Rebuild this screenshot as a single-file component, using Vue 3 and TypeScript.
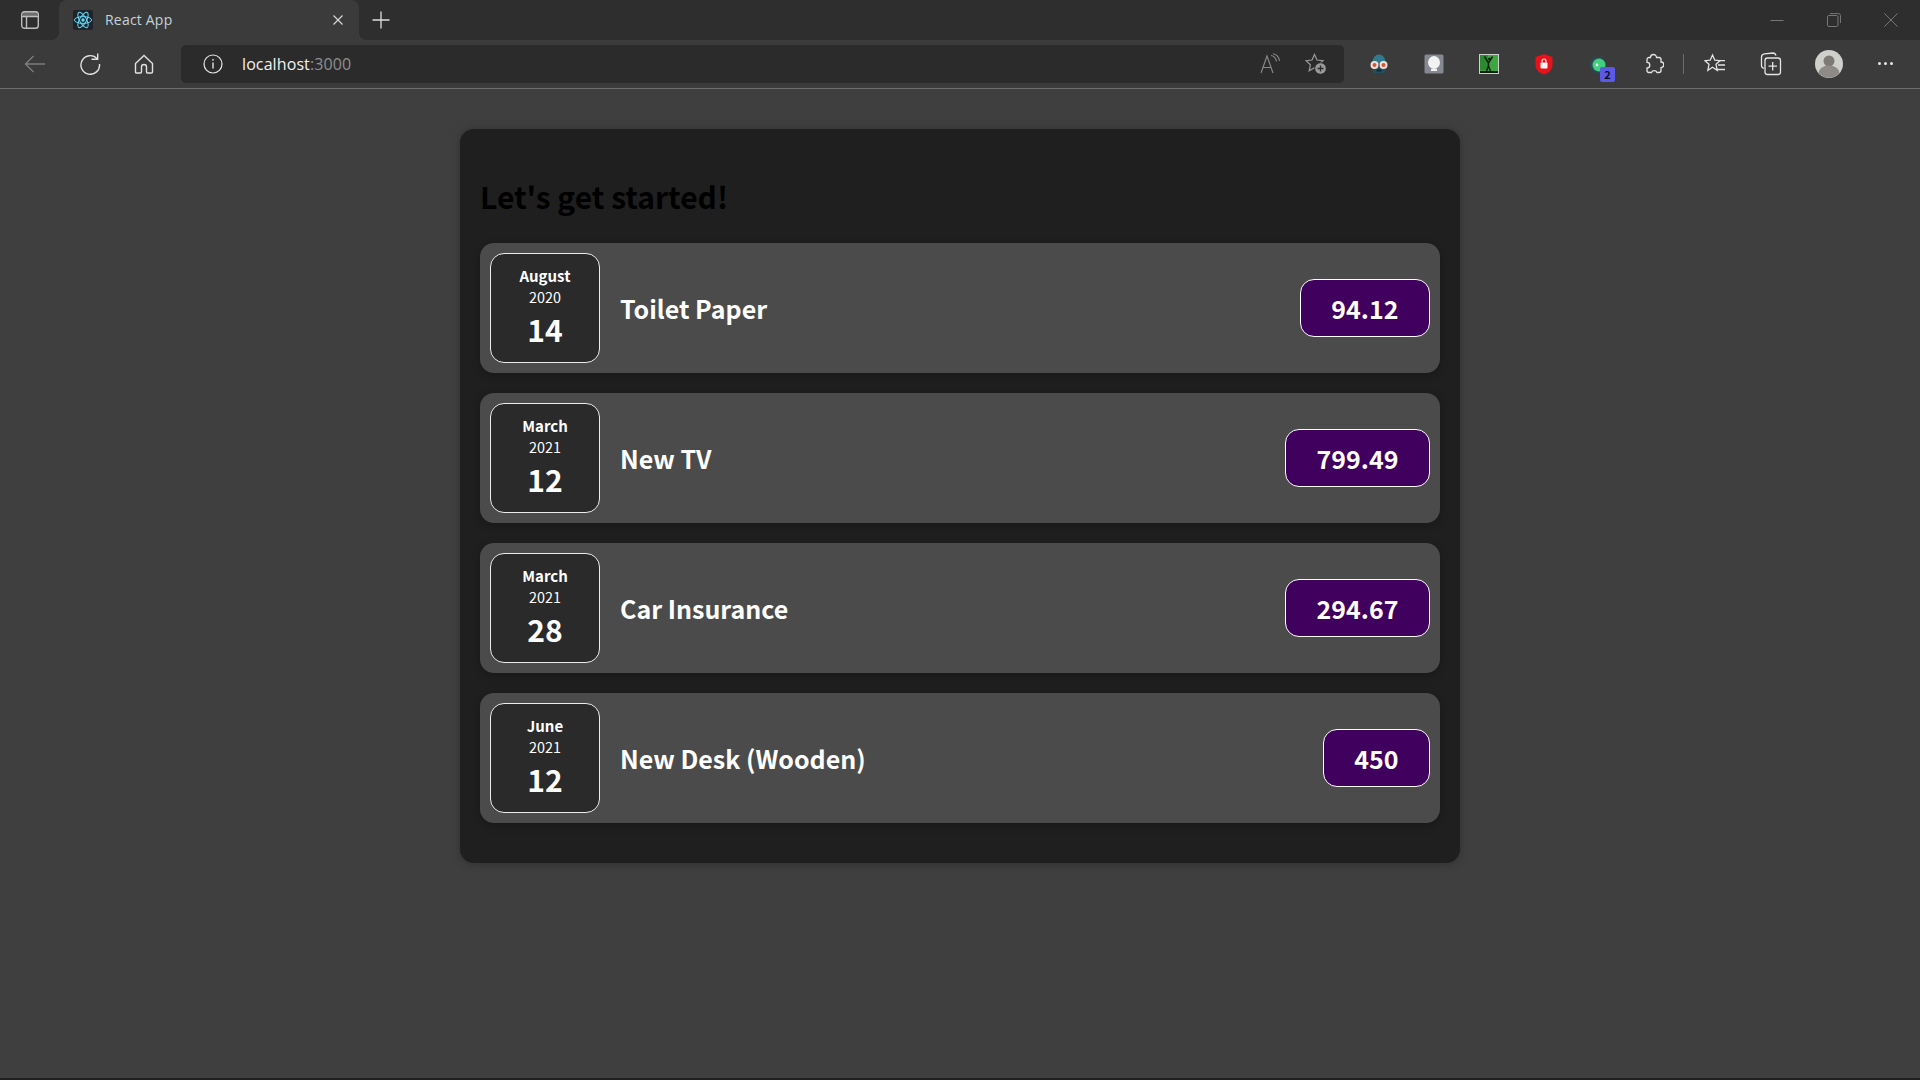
<template>
  <div class="window">
    <div class="tabstrip">
      <div class="tab-toggle">
        <svg width="20" height="20" viewBox="0 0 20 20" fill="none" stroke="#bdbdbd" stroke-width="1.4">
          <path d="M3 2h14v4.500H3z" fill="#bdbdbd" stroke="none" opacity=".45" />
          <rect x="1.700" y="1.700" width="16.600" height="16.600" rx="2.800" />
          <path d="M2 6.500h16M6.500 7v11" />
        </svg>
      </div>
      <div class="tab">
        <span class="favicon">
          <svg width="20" height="20" viewBox="0 0 20 20" fill="none" stroke="#61dafb" stroke-width="1">
            <circle cx="10" cy="10" r="1.700" fill="#61dafb" stroke="none" />
            <ellipse cx="10" cy="10" rx="8.600" ry="3.400" />
            <ellipse cx="10" cy="10" rx="8.600" ry="3.400" transform="rotate(60 10 10)" />
            <ellipse cx="10" cy="10" rx="8.600" ry="3.400" transform="rotate(120 10 10)" />
          </svg>
        </span>
        <span class="tab-title">React App</span>
        <svg class="tab-close" width="12" height="12" viewBox="0 0 12 12" stroke="#d6d6d6" stroke-width="1.200">
          <path d="M1.500 1.500l9 9M10.500 1.500l-9 9" />
        </svg>
      </div>
      <svg class="new-tab" width="18" height="18" viewBox="0 0 18 18" stroke="#dedede" stroke-width="1.300">
        <path d="M9 0.500v17M0.500 9h17" />
      </svg>
      <div class="window-controls">
        <svg width="14" height="14" viewBox="0 0 14 14" stroke="#767676" stroke-width="1"><path d="M0.500 7.500h13" /></svg>
        <svg width="14" height="14" viewBox="0 0 14 14" fill="none" stroke="#767676" stroke-width="1">
          <rect x="0.500" y="2.500" width="10.500" height="11" rx="1.500" />
          <path d="M3 .6h8.500a2 2 0 0 1 2 2V10" />
        </svg>
        <svg width="14" height="14" viewBox="0 0 14 14" stroke="#767676" stroke-width="1"><path d="M.5.5l13 13M13.500.5l-13 13" /></svg>
      </div>
    </div>

    <div class="toolbar">
      <div class="nav-buttons">
        <svg width="22" height="22" viewBox="0 0 22 22" fill="none" stroke="#7c7c7c" stroke-width="1.400">
          <path d="M21 11H1.500M9.500 3L1.500 11l8 8" />
        </svg>
        <svg width="22" height="22" viewBox="0 0 22 22" fill="none" stroke="#e2e2e2" stroke-width="1.400">
          <path d="M18.200 5.800A9.300 9.300 0 1 0 20.500 11" />
          <path d="M12.500 6.300h6.200V.6" />
        </svg>
        <svg width="20" height="20" viewBox="0 0 20 20" fill="none" stroke="#e2e2e2" stroke-width="1.400">
          <path d="M1.500 9.500L10 1.500l8.500 8V18a1 1 0 0 1-1 1h-4a1 1 0 0 1-1-1v-5a2.500 2.500 0 0 0-5 0v5a1 1 0 0 1-1 1h-4a1 1 0 0 1-1-1z" />
        </svg>
      </div>
      <div class="address-bar">
        <svg class="info-icon" width="20" height="20" viewBox="0 0 20 20" fill="none" stroke="#e6e6e6" stroke-width="1.200">
          <circle cx="10" cy="10" r="9" />
          <path d="M10 8.500v6" stroke-width="1.400" />
          <circle cx="10" cy="5.800" r=".9" fill="#e6e6e6" stroke="none" />
        </svg>
        <span class="url"><span class="url-host">localhost</span><span class="url-port">:3000</span></span>
        <div class="address-actions">
          <svg width="22" height="22" viewBox="0 0 22 22" fill="none" stroke="#8a8a8a" stroke-width="1.100">
            <path d="M2 20L8 3l6 17M4 14.500h8" />
            <path d="M12 2.500c3 .5 5 3 5.500 6M14 .8c3.500 .8 6 3.500 6.500 7" />
          </svg>
          <svg width="22" height="22" viewBox="0 0 22 22" fill="none" stroke="#9a9a9a" stroke-width="1.200">
            <path d="M9.500 1.500l2.500 5.500 6 .7-4.500 4.100 1.200 6-5.200-3-5.300 3 1.200-6L1 7.700l6-.7z" />
            <circle cx="15.500" cy="15.500" r="5.800" fill="#9a9a9a" stroke="#2b2b2b" stroke-width="1" />
            <path d="M15.500 12.500v6M12.500 15.500h6" stroke="#2b2b2b" stroke-width="1.300" />
          </svg>
        </div>
      </div>
      <div class="extensions">
        <svg width="20" height="22" viewBox="0 0 20 22">
          <path d="M3.500 9a6.500 7.500 0 0 1 13 0v2h-13z" fill="#2f7a8c" />
          <rect x="4" y="14" width="12" height="6" rx="1.500" fill="#22505e" />
          <circle cx="5.500" cy="12" r="4" fill="#f0e2d8" />
          <circle cx="14.500" cy="12" r="4" fill="#f0e2d8" />
          <circle cx="5.500" cy="12" r="2" fill="#d2543c" />
          <circle cx="14.500" cy="12" r="2" fill="#d2543c" />
          <path d="M7.500 17.500h5" stroke="#0f2a33" stroke-width="2" />
        </svg>
        <svg width="20" height="20" viewBox="0 0 20 20">
          <rect x="0.500" y="0.500" width="19" height="19" rx="1.500" fill="#858890" />
          <ellipse cx="10" cy="8.500" rx="6" ry="6.500" fill="#f2f2f2" />
          <rect x="7" y="15" width="6" height="2" fill="#f2f2f2" />
        </svg>
        <svg width="20" height="20" viewBox="0 0 20 20">
          <rect x="0.500" y="0.500" width="19" height="19" fill="#3fa73f" stroke="#cfcfcf" />
          <rect x="1" y="1" width="8" height="15" fill="#2d8a33" />
          <path d="M1 17h18v2H1z" fill="#0d1f0d" />
          <g fill="none" stroke="#0d1f0d" stroke-width="1.500">
            <path d="M5.500 2.500l4 6.500 4-6.500M9.500 9v3l-2 5M9.500 12l2 5" />
          </g>
          <circle cx="10.500" cy="5" r="1.500" fill="#0d1f0d" />
        </svg>
        <svg width="20" height="22" viewBox="0 0 20 22">
          <path d="M10 1l8.500 3v8c0 5-4 8-8.500 9.500C5.500 20 1.500 17 1.500 12V4z" fill="#e8121b" />
          <rect x="6.500" y="9.500" width="7" height="6" rx=".8" fill="#f4f4f4" />
          <path d="M8 9.500V8a2 2 0 0 1 4 0v1.500" fill="none" stroke="#f4f4f4" stroke-width="1.200" />
        </svg>
        <span class="bug-ext">
          <svg width="20" height="22" viewBox="0 0 20 22">
            <path d="M4 2l3 3M14 2l-3 3" stroke="#2a4a55" stroke-width="1.200" />
            <circle cx="9" cy="12" r="8" fill="#2a4a55" />
            <circle cx="10" cy="12" r="6.500" fill="#3fd17e" />
            <circle cx="8" cy="12" r="1.400" fill="#f0f0f0" />
          </svg>
          <span class="bug-badge">2</span>
        </span>
        <svg width="20" height="22" viewBox="0 0 20 22" fill="none" stroke="#e4e4e4" stroke-width="1.300">
          <path d="M6.500 4.500a3 3 0 0 1 6 0h2.500a2 2 0 0 1 2 2V9a2.800 2.800 0 0 1 0 5.600v2.900a2 2 0 0 1-2 2h-2a3 3 0 0 0-5.500 0H5a2 2 0 0 1-2-2V15a2.800 2.800 0 0 0 0-5.600V6.500a2 2 0 0 1 2-2z" />
        </svg>
        <span class="toolbar-sep"></span>
        <svg width="22" height="22" viewBox="0 0 22 22" fill="none" stroke="#e4e4e4" stroke-width="1.300">
          <path d="M8.500 2l2.300 5.200 5.200.5-4 3.600 1.200 6-4.700-3-4.700 3 1.200-6L1 7.700l5.200-.5z" />
          <path d="M14.500 7.700H21M14 12h7M12.500 16.500H21" />
        </svg>
        <svg class="collections" width="22" height="24" viewBox="0 0 22 24" fill="none" stroke="#e4e4e4" stroke-width="1.300">
          <path d="M4 16.500c-1.500-.5-2.500-1.500-2.500-3L1.500 5c0-2 1-3 3-3.200l8.500-.8c1.500 0 2.500 .8 3 2.500" />
          <rect x="5" y="6" width="15.500" height="16.500" rx="2.500" />
          <path d="M12.700 10v8.500M8.500 14.200h8.500" />
        </svg>
        <span class="avatar">
          <svg width="28" height="28" viewBox="0 0 28 28">
            <circle cx="14" cy="14" r="14" fill="#cfcfcb" />
            <circle cx="14" cy="11" r="5.500" fill="#7d7a76" />
            <path d="M3.500 23a10.500 7.500 0 0 1 21 0a14 14 0 0 1-21 0z" fill="#8e8b87" />
          </svg>
        </span>
        <span class="more-dots"><i></i><i></i><i></i></span>
      </div>
    </div>

    <main class="page">
      <section class="expenses-card">
        <h2 class="heading">Let's get started!</h2>
        <div class="expense-list">
          <div v-for="item in expenses" :key="item.id" class="expense-item">
            <div class="expense-date">
              <div class="month">{{ item.month }}</div>
              <div class="year">{{ item.year }}</div>
              <div class="day">{{ item.day }}</div>
            </div>
            <h2 class="expense-title">{{ item.title }}</h2>
            <div class="expense-price">{{ item.amount }}</div>
          </div>
        </div>
      </section>
    </main>
  </div>
</template>

<script setup lang="ts">
interface Expense {
  id: string
  month: string
  year: string
  day: string
  title: string
  amount: string
}

const expenses: Expense[] = [
  { id: 'e1', month: 'August', year: '2020', day: '14', title: 'Toilet Paper', amount: '94.12' },
  { id: 'e2', month: 'March', year: '2021', day: '12', title: 'New TV', amount: '799.49' },
  { id: 'e3', month: 'March', year: '2021', day: '28', title: 'Car Insurance', amount: '294.67' },
  { id: 'e4', month: 'June', year: '2021', day: '12', title: 'New Desk (Wooden)', amount: '450' },
]
</script>

<style>
html,
body {
  margin: 0;
  background: #3f3f3f;
}
</style>

<style scoped>
.window {
  height: 1080px;
  display: flex;
  flex-direction: column;
  overflow: hidden;
  box-sizing: border-box;
  border-bottom: 2px solid #1f1f1f;
  font-family: "Noto Sans CJK JP", "Noto Sans", sans-serif;
}

.tabstrip {
  height: 40px;
  flex: none;
  display: flex;
  align-items: center;
  background: #2e2e2e;
  box-sizing: border-box;
}

.tab-toggle {
  width: 59px;
  height: 40px;
  display: flex;
  align-items: center;
  justify-content: center;
  padding-left: 1px;
  box-sizing: border-box;
}

.tab {
  position: relative;
  width: 300px;
  height: 40px;
  display: flex;
  align-items: center;
  background: #3b3b3b;
  border-radius: 8px 8px 0 0;
  box-sizing: border-box;
  padding-left: 14px;
  font-family: "Open Sans", sans-serif;
}

.tab::before,
.tab::after {
  content: "";
  position: absolute;
  bottom: 0;
  width: 8px;
  height: 8px;
}

.tab::before {
  left: -8px;
  background: radial-gradient(circle at 0 0, transparent 8px, #3b3b3b 8px);
}

.tab::after {
  right: -8px;
  background: radial-gradient(circle at 100% 0, transparent 8px, #3b3b3b 8px);
}

.favicon {
  width: 20px;
  height: 20px;
  background: #20232a;
  border-radius: 2px;
  display: block;
}

.favicon svg {
  display: block;
}

.tab-title {
  margin-left: 12px;
  margin-top: -2px;
  font-size: 14px;
  letter-spacing: 0.2px;
  color: #c4d2dc;
  flex: 1;
}

.tab-close {
  margin-right: 15px;
}

.new-tab {
  margin-left: 13px;
}

.window-controls {
  margin-left: auto;
  display: flex;
  gap: 43px;
  margin-right: 22px;
}

.toolbar {
  height: 49px;
  flex: none;
  display: flex;
  align-items: center;
  background: #3b3b3b;
  border-bottom: 1px solid #6d6d6d;
  box-sizing: border-box;
  padding-bottom: 1px;
}

.nav-buttons {
  width: 181px;
  display: flex;
  align-items: center;
  gap: 33px;
  padding-left: 24px;
  box-sizing: border-box;
}

.address-bar {
  width: 1163px;
  height: 38px;
  background: #2b2b2b;
  border-radius: 5px;
  display: flex;
  align-items: center;
  box-sizing: border-box;
  padding: 0 17px 0 22px;
}

.url {
  margin-left: 19px;
  font-family: "Open Sans", sans-serif;
  font-size: 16px;
  letter-spacing: 0.1px;
}

.url-host {
  color: #f2f2f2;
}

.url-port {
  color: #8f8f8f;
}

.address-actions {
  margin-left: auto;
  display: flex;
  gap: 24px;
  align-items: center;
}

.extensions {
  flex: 1;
  display: flex;
  align-items: center;
  padding-left: 25px;
  box-sizing: border-box;
  gap: 35px;
}

.bug-ext {
  position: relative;
  display: block;
  height: 22px;
  width: 20px;
}

.bug-badge {
  position: absolute;
  left: 11px;
  top: 14px;
  width: 15px;
  height: 15px;
  background: #5a5ae6;
  color: #0d0d20;
  border-radius: 2px;
  font-size: 11px;
  font-weight: 700;
  line-height: 15px;
  text-align: center;
}

.toolbar-sep {
  width: 1px;
  height: 20px;
  background: #6c6c6c;
  margin: 0 -15px 0 -16px;
}

.collections {
  margin-left: -1px;
}

.avatar {
  display: block;
  width: 28px;
  height: 28px;
  margin-left: -2px;
}

.avatar svg {
  display: block;
}

.more-dots {
  display: flex;
  gap: 3px;
}

.more-dots i {
  width: 3px;
  height: 3px;
  border-radius: 50%;
  background: #e6e6e6;
  display: block;
}

.page {
  flex: 1;
  background: #3f3f3f;
  padding-top: 40px;
}

.expenses-card {
  width: 1000px;
  margin: 0 auto;
  padding: 40px 20px;
  box-sizing: border-box;
  background: #1f1f1f;
  border-radius: 14px;
  box-shadow: 0 1px 8px rgba(0, 0, 0, 0.25);
}

.heading {
  margin: 0 0 20px;
  font-size: 30px;
  line-height: 54px;
  font-weight: 700;
  color: #000;
}

.expense-list {
  display: flex;
  flex-direction: column;
  gap: 20px;
}

.expense-item {
  height: 130px;
  display: flex;
  align-items: center;
  background: #4b4b4b;
  border-radius: 14px;
  padding: 10px;
  box-sizing: border-box;
  box-shadow: 0 2px 8px rgba(0, 0, 0, 0.25);
}

.expense-date {
  width: 110px;
  height: 110px;
  flex: none;
  display: flex;
  flex-direction: column;
  align-items: center;
  justify-content: center;
  background: #2a2a2a;
  border: 1px solid #ececec;
  border-radius: 14px;
  box-sizing: border-box;
  padding-bottom: 1px;
  color: #fff;
}

.month {
  font-size: 15px;
  line-height: 21px;
  font-weight: 700;
}

.year {
  font-size: 14.400px;
  line-height: 21px;
}

.day {
  font-size: 30px;
  line-height: 44px;
  font-weight: 700;
}

.expense-title {
  flex: 1;
  margin: 0 0 0 20px;
  font-size: 25px;
  font-weight: 700;
  line-height: 36px;
  color: #fff;
}

.expense-price {
  height: 58px;
  padding: 0 30.500px;
  display: flex;
  align-items: center;
  background: #40005d;
  border: 1px solid #fff;
  border-radius: 14px;
  box-sizing: border-box;
  font-size: 25px;
  font-weight: 700;
  color: #fff;
}
</style>
